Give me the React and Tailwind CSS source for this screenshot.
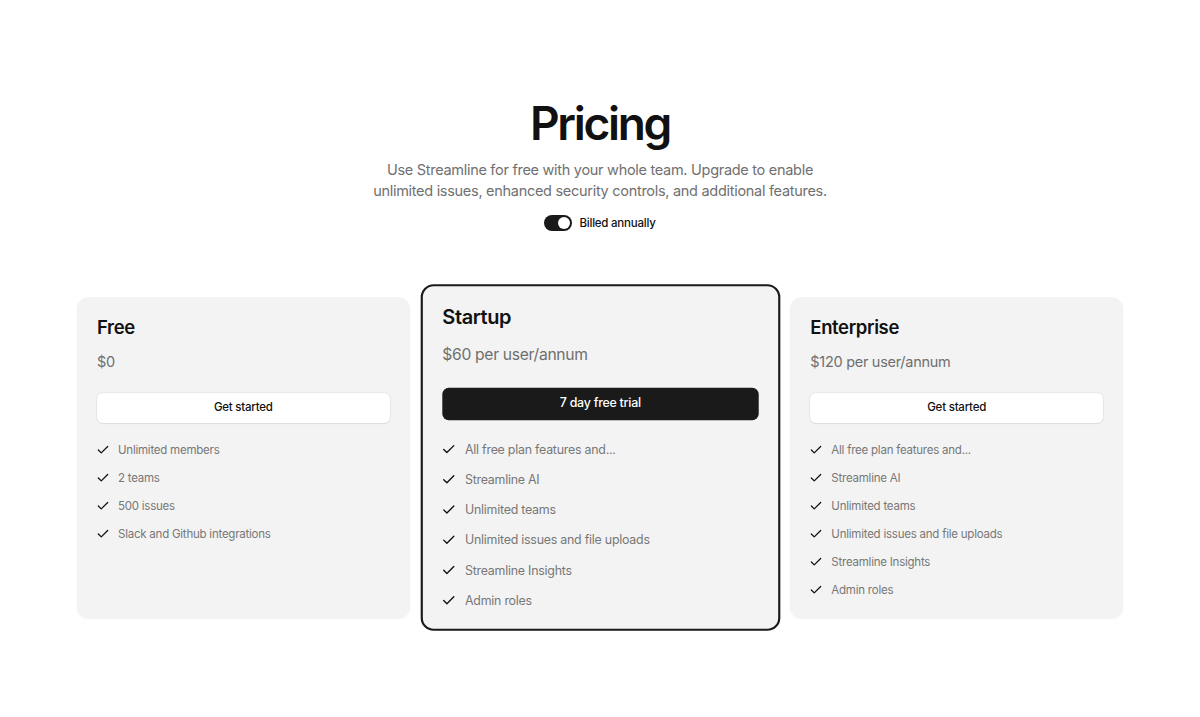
import React, { useState } from 'react';
import { Check } from 'lucide-react';

const plans = [
  {
    name: 'Free',
    price: '$0',
    cta: 'Get started',
    features: ['Unlimited members', '2 teams', '500 issues', 'Slack and Github integrations'],
  },
  {
    name: 'Startup',
    price: '$60 per user/annum',
    cta: '7 day free trial',
    featured: true,
    features: ['All free plan features and...', 'Streamline AI', 'Unlimited teams', 'Unlimited issues and file uploads', 'Streamline Insights', 'Admin roles'],
  },
  {
    name: 'Enterprise',
    price: '$120 per user/annum',
    cta: 'Get started',
    features: ['All free plan features and...', 'Streamline AI', 'Unlimited teams', 'Unlimited issues and file uploads', 'Streamline Insights', 'Admin roles'],
  },
]

function PlanCard({ plan }) {
  return (
    <div
      className={
        plan.featured
          ? 'flex flex-col rounded-xl border-2 border-[#1a1a1a] bg-[#f3f3f3] pt-[14px] px-[18px] pb-[18px] scale-[1.08]'
          : 'flex flex-col rounded-xl bg-[#f3f3f3] pt-4 px-5 pb-[19px] shadow-[0_1px_2px_rgba(0,0,0,0.06)]'
      }
    >
      <h2 className="text-[18.5px] leading-7 font-semibold tracking-[-0.02em] text-[#111]">{plan.name}</h2>
      <p className="mt-[9px] text-[14.5px] leading-6 tracking-[-0.02em] text-[#6f6f6f]">{plan.price}</p>
      <button
        className={
          plan.featured
            ? 'mt-[19px] h-[30px] w-full rounded-md bg-[#1a1a1a] text-[11.5px] font-medium tracking-[-0.02em] text-white'
            : 'mt-[19px] h-[30px] w-full rounded-md bg-white text-[11.5px] font-medium tracking-[-0.02em] text-[#111] shadow-[0_0_0_1px_rgba(0,0,0,0.04),0_1px_2px_rgba(0,0,0,0.06)]'
        }
      >
        {plan.cta}
      </button>
      <ul className="mt-[19px] flex flex-col gap-3">
        {plan.features.map(f => (
          <li key={f} className="flex items-center gap-2 text-[11.5px] leading-4 tracking-[-0.02em] text-[#777]">
            <Check size={14} strokeWidth={2.2} className="text-[#111] shrink-0 -ml-px" />
            {f}
          </li>
        ))}
      </ul>
    </div>
  )
}

export default function App() {
  const [annual, setAnnual] = useState(true)

  return (
    <div className="min-h-[717px] bg-white flex flex-col items-center pt-[100px] font-['Inter',sans-serif]">
      <h1 className="text-[46px] leading-none font-semibold tracking-tighter text-[#111]">Pricing</h1>
      <p className="mt-[13px] text-center text-[14.5px] leading-[21px] tracking-[-0.02em] text-[#707070]">
        Use Streamline for free with your whole team. Upgrade to enable<br />
        unlimited issues, enhanced security controls, and additional features.
      </p>
      <div className="mt-[14px] flex items-center gap-[7px]">
        <button
          onClick={() => setAnnual(!annual)}
          className={`flex h-4 w-7 items-center rounded-full p-[2px] ${annual ? 'bg-[#1a1a1a] justify-end' : 'bg-gray-300 justify-start'}`}
        >
          <span className="h-3 w-3 rounded-full bg-white"></span>
        </button>
        <span className="text-[11.5px] leading-4 font-medium tracking-[-0.02em] text-[#111]">Billed annually</span>
      </div>

      <div className="mt-[66px] grid w-[1046px] grid-cols-3 gap-6">
        {plans.map(p => <PlanCard key={p.name} plan={p} />)}
      </div>
    </div>
  )
}
